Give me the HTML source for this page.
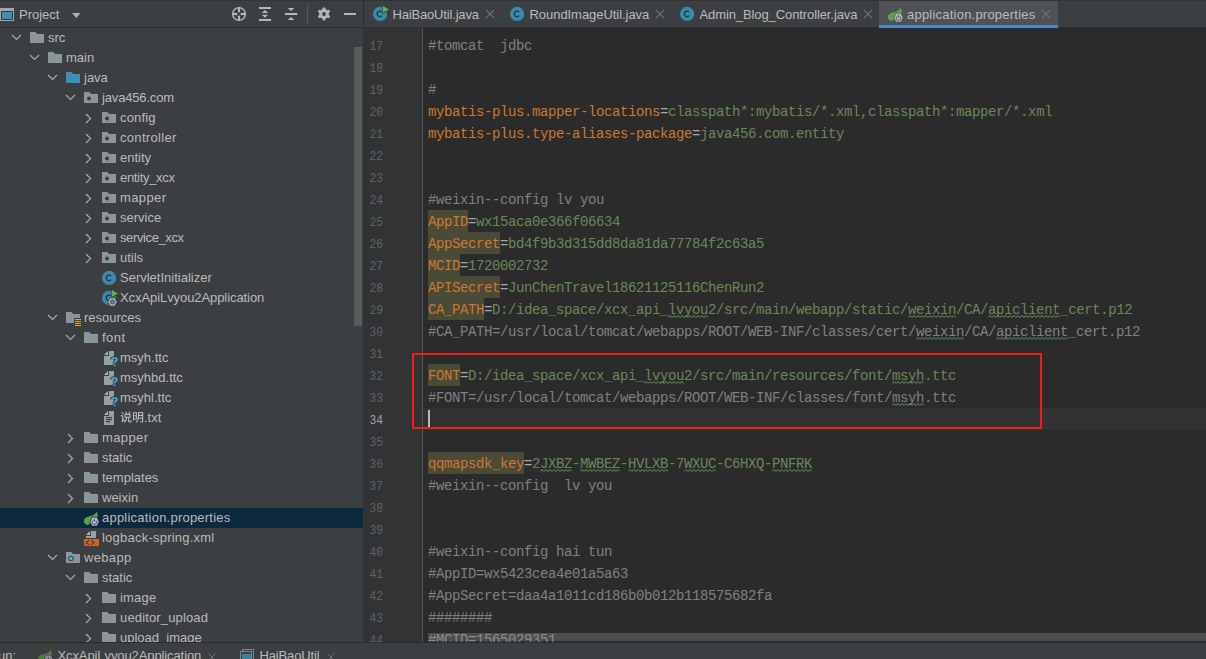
<!DOCTYPE html>
<html><head><meta charset="utf-8"><style>
*{margin:0;padding:0;box-sizing:border-box}
html,body{width:1206px;height:659px;overflow:hidden;background:#3C3F41}
body{position:relative;font-family:"Liberation Sans",sans-serif;font-size:13px;color:#BBBBBB}
.abs{position:absolute}
.ic{position:absolute;display:block}
#topline{position:absolute;left:0;top:0;width:1206px;height:1px;background:#323435}
#phead{position:absolute;left:0;top:0;width:363px;height:28px;background:#3C3F41;border-bottom:1px solid #2B2D2F}
#tree{position:absolute;left:0;top:28px;width:363px;height:614px;overflow:hidden;background:#3C3F41}
.tl{position:absolute;height:20px;line-height:20px;white-space:nowrap}
.sel{position:absolute;left:0;width:363px;height:20px;background:#0D293E}
#vscroll{position:absolute;left:354px;top:47px;width:8px;height:279px;background:#595B5D}
#psep{position:absolute;left:363px;top:0;width:1px;height:27px;background:#2B2D2F}
#tabs{position:absolute;left:364px;top:0;width:842px;height:28px;background:#3C3F41;border-bottom:1px solid #2B2D2F}
.tab{position:absolute;top:1px;height:27px;line-height:27px;white-space:nowrap}
.tabx{position:absolute;top:9px;margin-left:-1px}
#gutter{position:absolute;left:363px;top:28px;width:59px;height:614px;background:#313335;overflow:hidden}
#gline{position:absolute;left:422px;top:28px;width:1px;height:614px;background:#555555}
.ln{position:absolute;left:1px;width:19px;text-align:right;height:22px;line-height:22px;padding-top:2px;font-family:"Liberation Mono",monospace;font-size:12.5px;color:#606366;transform:scaleX(0.9);transform-origin:19px 0}
.ln.cur{color:#A4A3A3}
#editor{position:absolute;left:423px;top:28px;width:783px;height:614px;background:#2B2B2B;overflow:hidden}
#code{position:absolute;left:5px;top:0;}
.cl{position:absolute;left:0;height:22px;line-height:22px;padding-top:1px;white-space:pre;font-family:"Liberation Mono",monospace;font-size:14px;letter-spacing:-0.4px}
.tabul{}
.curline{position:absolute;left:-5px;width:783px;height:22px;background:#323232}
.hl{position:absolute;height:22px;background:#4B4A36}
.typo{position:absolute;display:block}
.k{color:#CC7832} .v{color:#6A8759} .c{color:#808080} .e{color:#A0A8B0}
#caret{position:absolute;left:5px;top:382px;width:2px;height:17px;background:#BBBBBB}
#hscroll{position:absolute;left:5px;top:605px;width:778px;height:8px;background:rgba(180,180,180,0.25)}
#redbox{position:absolute;left:412px;top:353px;width:630px;height:76px;border:2px solid #EE1F1A}
.bt{position:absolute;top:0;height:16px;overflow:hidden;white-space:nowrap;line-height:26px}
#bottom{position:absolute;left:0;top:642px;width:1206px;height:17px;background:#3C3F41;border-top:1px solid #2B2D2F}
</style></head><body>
<div id="phead">
<svg class="ic" style="left:0;top:0" width="363" height="27">
<rect x="0" y="8" width="14" height="13" fill="#9AA7B0"/><rect x="1" y="11" width="12" height="9" fill="#35393B"/><rect x="2" y="12" width="10" height="7" fill="#3D8FB0"/>
<path d="M72,13 H80.5 L76.25,18 Z" fill="#AFB1B3"/>
<circle cx="239" cy="14" r="6.4" fill="none" stroke="#B4B6B8" stroke-width="1.4"/>
<rect x="237.9" y="7" width="2.2" height="5.3" fill="#B4B6B8"/><rect x="237.9" y="15.7" width="2.2" height="5.3" fill="#B4B6B8"/>
<rect x="232" y="12.9" width="5.3" height="2.2" fill="#B4B6B8"/><rect x="240.7" y="12.9" width="5.3" height="2.2" fill="#B4B6B8"/>
<rect x="259" y="7" width="12" height="2" fill="#B4B6B8"/><rect x="259" y="19" width="12" height="2" fill="#B4B6B8"/>
<path d="M261.7,13 L265,10 L268.3,13 Z M261.7,14.8 L268.3,14.8 L265,17.8 Z" fill="#B4B6B8"/>
<rect x="285" y="13" width="12.3" height="2" fill="#B4B6B8"/>
<path d="M287.7,8 L294.3,8 L291,11 Z M287.7,20 L291,17 L294.3,20 Z" fill="#B4B6B8"/>
<rect x="307" y="4" width="1" height="20" fill="#55595C"/>
<g transform="translate(324,14)" fill="#B4B6B8"><circle r="4.9"/><rect x="-1.4" y="-6.6" width="2.8" height="13.2" rx="0.8"/><rect x="-1.4" y="-6.6" width="2.8" height="13.2" rx="0.8" transform="rotate(60)"/><rect x="-1.4" y="-6.6" width="2.8" height="13.2" rx="0.8" transform="rotate(120)"/><circle r="1.9" fill="#3C3F41"/></g>
<rect x="344" y="13" width="12" height="2" fill="#B4B6B8"/>
</svg>
<div class="tl" style="left:19px;top:5px">Project</div>
</div>
<div id="tree">
<svg class="ic" style="left:11.0px;top:6px" width="11" height="7"><polyline points="1,1 5.5,5.5 10,1" fill="none" stroke="#A9ABAD" stroke-width="1.2"/></svg><svg class="ic" style="left:30px;top:4px" width="16" height="16"><path d="M0,0 H5.2 L7.2,2 H14 V11 H0 Z" fill="#8A959C"/></svg><div class="tl" style="top:0px;left:48px;">src</div><svg class="ic" style="left:29.0px;top:26px" width="11" height="7"><polyline points="1,1 5.5,5.5 10,1" fill="none" stroke="#A9ABAD" stroke-width="1.2"/></svg><svg class="ic" style="left:48px;top:24px" width="16" height="16"><path d="M0,0 H5.2 L7.2,2 H14 V11 H0 Z" fill="#8A959C"/></svg><div class="tl" style="top:20px;left:66px;">main</div><svg class="ic" style="left:47.0px;top:46px" width="11" height="7"><polyline points="1,1 5.5,5.5 10,1" fill="none" stroke="#A9ABAD" stroke-width="1.2"/></svg><svg class="ic" style="left:66px;top:44px" width="16" height="16"><path d="M0,0 H5.2 L7.2,2 H14 V11 H0 Z" fill="#3E8FB3"/></svg><div class="tl" style="top:40px;left:84px;">java</div><svg class="ic" style="left:65.0px;top:66px" width="11" height="7"><polyline points="1,1 5.5,5.5 10,1" fill="none" stroke="#A9ABAD" stroke-width="1.2"/></svg><svg class="ic" style="left:84px;top:64px" width="16" height="16"><path d="M0,0 H5.2 L7.2,2 H14 V11 H0 Z" fill="#8A959C"/><circle cx="5" cy="6.5" r="2" fill="#3C3F41"/></svg><div class="tl" style="top:60px;left:102px;letter-spacing:-0.164px;">java456.com</div><svg class="ic" style="left:85.0px;top:84.5px" width="7" height="11"><polyline points="1,1 5.5,5.5 1,10" fill="none" stroke="#A9ABAD" stroke-width="1.2"/></svg><svg class="ic" style="left:102px;top:84px" width="16" height="16"><path d="M0,0 H5.2 L7.2,2 H14 V11 H0 Z" fill="#8A959C"/><circle cx="5" cy="6.5" r="2" fill="#3C3F41"/></svg><div class="tl" style="top:80px;left:120px;letter-spacing:0.183px;">config</div><svg class="ic" style="left:85.0px;top:104.5px" width="7" height="11"><polyline points="1,1 5.5,5.5 1,10" fill="none" stroke="#A9ABAD" stroke-width="1.2"/></svg><svg class="ic" style="left:102px;top:104px" width="16" height="16"><path d="M0,0 H5.2 L7.2,2 H14 V11 H0 Z" fill="#8A959C"/><circle cx="5" cy="6.5" r="2" fill="#3C3F41"/></svg><div class="tl" style="top:100px;left:120px;letter-spacing:0.310px;">controller</div><svg class="ic" style="left:85.0px;top:124.5px" width="7" height="11"><polyline points="1,1 5.5,5.5 1,10" fill="none" stroke="#A9ABAD" stroke-width="1.2"/></svg><svg class="ic" style="left:102px;top:124px" width="16" height="16"><path d="M0,0 H5.2 L7.2,2 H14 V11 H0 Z" fill="#8A959C"/><circle cx="5" cy="6.5" r="2" fill="#3C3F41"/></svg><div class="tl" style="top:120px;left:120px;">entity</div><svg class="ic" style="left:85.0px;top:144.5px" width="7" height="11"><polyline points="1,1 5.5,5.5 1,10" fill="none" stroke="#A9ABAD" stroke-width="1.2"/></svg><svg class="ic" style="left:102px;top:144px" width="16" height="16"><path d="M0,0 H5.2 L7.2,2 H14 V11 H0 Z" fill="#8A959C"/><circle cx="5" cy="6.5" r="2" fill="#3C3F41"/></svg><div class="tl" style="top:140px;left:120px;letter-spacing:-0.320px;">entity_xcx</div><svg class="ic" style="left:85.0px;top:164.5px" width="7" height="11"><polyline points="1,1 5.5,5.5 1,10" fill="none" stroke="#A9ABAD" stroke-width="1.2"/></svg><svg class="ic" style="left:102px;top:164px" width="16" height="16"><path d="M0,0 H5.2 L7.2,2 H14 V11 H0 Z" fill="#8A959C"/><circle cx="5" cy="6.5" r="2" fill="#3C3F41"/></svg><div class="tl" style="top:160px;left:120px;letter-spacing:0.383px;">mapper</div><svg class="ic" style="left:85.0px;top:184.5px" width="7" height="11"><polyline points="1,1 5.5,5.5 1,10" fill="none" stroke="#A9ABAD" stroke-width="1.2"/></svg><svg class="ic" style="left:102px;top:184px" width="16" height="16"><path d="M0,0 H5.2 L7.2,2 H14 V11 H0 Z" fill="#8A959C"/><circle cx="5" cy="6.5" r="2" fill="#3C3F41"/></svg><div class="tl" style="top:180px;left:120px;">service</div><svg class="ic" style="left:85.0px;top:204.5px" width="7" height="11"><polyline points="1,1 5.5,5.5 1,10" fill="none" stroke="#A9ABAD" stroke-width="1.2"/></svg><svg class="ic" style="left:102px;top:204px" width="16" height="16"><path d="M0,0 H5.2 L7.2,2 H14 V11 H0 Z" fill="#8A959C"/><circle cx="5" cy="6.5" r="2" fill="#3C3F41"/></svg><div class="tl" style="top:200px;left:120px;letter-spacing:-0.382px;">service_xcx</div><svg class="ic" style="left:85.0px;top:224.5px" width="7" height="11"><polyline points="1,1 5.5,5.5 1,10" fill="none" stroke="#A9ABAD" stroke-width="1.2"/></svg><svg class="ic" style="left:102px;top:224px" width="16" height="16"><path d="M0,0 H5.2 L7.2,2 H14 V11 H0 Z" fill="#8A959C"/><circle cx="5" cy="6.5" r="2" fill="#3C3F41"/></svg><div class="tl" style="top:220px;left:120px;">utils</div><svg class="ic" style="left:101px;top:240px" width="20" height="20"><circle cx="8.1" cy="9.9" r="7.1" fill="#3B89AC"/><path d="M10,8.2 A2.7,2.7 0 1 0 10,11.6" fill="none" stroke="#26343C" stroke-width="1.3"/></svg><div class="tl" style="top:240px;left:120px;">ServletInitializer</div><svg class="ic" style="left:101px;top:260px" width="20" height="20"><circle cx="8.1" cy="9.9" r="7.1" fill="#3B89AC"/><path d="M10,8.2 A2.7,2.7 0 1 0 10,11.6" fill="none" stroke="#26343C" stroke-width="1.3"/><path d="M10.5,1 L18.8,5.5 L10.5,10 Z" fill="#3C3F41"/><path d="M11,2 L16.9,5.5 L11,8.7 Z" fill="#5DB34A"/><path d="M6.3,14 L8.9,9.4 L14.1,9.4 L16.7,14 L14.1,18.6 L8.9,18.6 Z" fill="#3C3F41"/><path d="M7.2,14 L9.35,10.2 L13.65,10.2 L15.8,14 L13.65,17.8 L9.35,17.8 Z" fill="#AFB5BA"/><circle cx="11.5" cy="14" r="2" fill="#5A95B0" stroke="#3C3F41" stroke-width="0.9"/></svg><div class="tl" style="top:260px;left:120px;letter-spacing:-0.078px;">XcxApiLvyou2Application</div><svg class="ic" style="left:47.0px;top:286px" width="11" height="7"><polyline points="1,1 5.5,5.5 10,1" fill="none" stroke="#A9ABAD" stroke-width="1.2"/></svg><svg class="ic" style="left:66px;top:284px" width="18" height="16"><path d="M0,0 H5.2 L7.2,2 H14 V11 H0 Z" fill="#8A959C"/><rect x="8" y="6" width="8" height="9" fill="#3C3F41"/><rect x="9" y="7" width="6" height="1" fill="#E3A43A"/><rect x="9" y="9" width="6" height="1" fill="#E3A43A"/><rect x="9" y="11" width="6" height="1" fill="#E3A43A"/><rect x="9" y="13" width="6" height="1" fill="#E3A43A"/></svg><div class="tl" style="top:280px;left:84px;">resources</div><svg class="ic" style="left:65.0px;top:306px" width="11" height="7"><polyline points="1,1 5.5,5.5 10,1" fill="none" stroke="#A9ABAD" stroke-width="1.2"/></svg><svg class="ic" style="left:84px;top:304px" width="16" height="16"><path d="M0,0 H5.2 L7.2,2 H14 V11 H0 Z" fill="#8A959C"/></svg><div class="tl" style="top:300px;left:102px;letter-spacing:0.475px;">font</div><svg class="ic" style="left:102px;top:321px" width="18" height="18"><path d="M2,6 L6,2 V6 Z" fill="#A9B4BB"/><path d="M7,2 H12 V16 H2 V7 H7 Z" fill="#95A0A7"/><path d="M9.9,10.6 C9.9,8.4 14.9,8.4 14.9,10.6 C14.9,12.3 12.4,12.3 12.4,14.2" fill="none" stroke="#3C3F41" stroke-width="3.6"/><rect x="10.7" y="14.6" width="3.4" height="3.2" fill="#3C3F41"/><path d="M9.9,10.6 C9.9,8.4 14.9,8.4 14.9,10.6 C14.9,12.3 12.4,12.3 12.4,14.2" fill="none" stroke="#40B6E0" stroke-width="1.6"/><rect x="11.6" y="15.4" width="1.7" height="1.7" fill="#40B6E0"/></svg><div class="tl" style="top:320px;left:120px;">msyh.ttc</div><svg class="ic" style="left:102px;top:341px" width="18" height="18"><path d="M2,6 L6,2 V6 Z" fill="#A9B4BB"/><path d="M7,2 H12 V16 H2 V7 H7 Z" fill="#95A0A7"/><path d="M9.9,10.6 C9.9,8.4 14.9,8.4 14.9,10.6 C14.9,12.3 12.4,12.3 12.4,14.2" fill="none" stroke="#3C3F41" stroke-width="3.6"/><rect x="10.7" y="14.6" width="3.4" height="3.2" fill="#3C3F41"/><path d="M9.9,10.6 C9.9,8.4 14.9,8.4 14.9,10.6 C14.9,12.3 12.4,12.3 12.4,14.2" fill="none" stroke="#40B6E0" stroke-width="1.6"/><rect x="11.6" y="15.4" width="1.7" height="1.7" fill="#40B6E0"/></svg><div class="tl" style="top:340px;left:120px;">msyhbd.ttc</div><svg class="ic" style="left:102px;top:361px" width="18" height="18"><path d="M2,6 L6,2 V6 Z" fill="#A9B4BB"/><path d="M7,2 H12 V16 H2 V7 H7 Z" fill="#95A0A7"/><path d="M9.9,10.6 C9.9,8.4 14.9,8.4 14.9,10.6 C14.9,12.3 12.4,12.3 12.4,14.2" fill="none" stroke="#3C3F41" stroke-width="3.6"/><rect x="10.7" y="14.6" width="3.4" height="3.2" fill="#3C3F41"/><path d="M9.9,10.6 C9.9,8.4 14.9,8.4 14.9,10.6 C14.9,12.3 12.4,12.3 12.4,14.2" fill="none" stroke="#40B6E0" stroke-width="1.6"/><rect x="11.6" y="15.4" width="1.7" height="1.7" fill="#40B6E0"/></svg><div class="tl" style="top:360px;left:120px;">msyhl.ttc</div><svg class="ic" style="left:102px;top:381px" width="18" height="18"><path d="M2,6 L6,2 V6 Z" fill="#A9B4BB"/><path d="M7,2 H12 V16 H2 V7 H7 Z" fill="#95A0A7"/><rect x="4" y="8" width="6" height="1.2" fill="#3C3F41"/><rect x="4" y="10" width="6" height="1.2" fill="#3C3F41"/><rect x="4" y="12" width="4" height="1.2" fill="#3C3F41"/></svg><div class="tl" style="top:380px;left:120px"><svg style="position:absolute;left:0;top:2px" width="24" height="16" viewBox="0 -880 2000 1160"><g transform="scale(1,-1)"><path d="M99 769C153 719 222 646 254 602L321 668C288 711 217 779 163 826ZM472 560H786V400H472ZM168 -56C185 -34 217 -7 412 140C402 159 387 199 380 226L273 149V533H41V440H177V129C177 84 138 46 115 31C133 11 159 -32 168 -56ZM380 644V315H499C488 162 458 50 294 -12C314 -29 340 -62 351 -84C538 -7 579 129 594 315H674V48C674 -43 693 -71 776 -71C792 -71 847 -71 863 -71C931 -71 955 -35 964 100C938 106 899 122 880 137C878 32 874 17 853 17C842 17 800 17 791 17C771 17 768 21 768 49V315H882V644H782C809 694 837 755 864 813L764 843C745 783 711 701 681 644H528L594 673C578 720 538 790 499 842L418 808C454 757 489 691 504 644Z" fill="#BBBBBB"/><path transform="translate(1000,0)" d="M325 445V268H163V445ZM325 530H163V699H325ZM75 786V91H163V181H413V786ZM840 715V562H588V715ZM496 802V444C496 289 479 100 310 -27C330 -40 366 -72 380 -91C494 -6 547 114 570 234H840V32C840 15 834 9 816 8C798 8 736 7 676 9C690 -15 706 -57 710 -83C795 -83 851 -80 887 -65C922 -50 934 -22 934 31V802ZM840 476V320H583C587 363 588 404 588 443V476Z" fill="#BBBBBB"/></g></svg><span style="padding-left:24px">.txt</span></div><svg class="ic" style="left:67.0px;top:404.5px" width="7" height="11"><polyline points="1,1 5.5,5.5 1,10" fill="none" stroke="#A9ABAD" stroke-width="1.2"/></svg><svg class="ic" style="left:84px;top:404px" width="16" height="16"><path d="M0,0 H5.2 L7.2,2 H14 V11 H0 Z" fill="#8A959C"/></svg><div class="tl" style="top:400px;left:102px;letter-spacing:0.383px;">mapper</div><svg class="ic" style="left:67.0px;top:424.5px" width="7" height="11"><polyline points="1,1 5.5,5.5 1,10" fill="none" stroke="#A9ABAD" stroke-width="1.2"/></svg><svg class="ic" style="left:84px;top:424px" width="16" height="16"><path d="M0,0 H5.2 L7.2,2 H14 V11 H0 Z" fill="#8A959C"/></svg><div class="tl" style="top:420px;left:102px;">static</div><svg class="ic" style="left:67.0px;top:444.5px" width="7" height="11"><polyline points="1,1 5.5,5.5 1,10" fill="none" stroke="#A9ABAD" stroke-width="1.2"/></svg><svg class="ic" style="left:84px;top:444px" width="16" height="16"><path d="M0,0 H5.2 L7.2,2 H14 V11 H0 Z" fill="#8A959C"/></svg><div class="tl" style="top:440px;left:102px;">templates</div><svg class="ic" style="left:67.0px;top:464.5px" width="7" height="11"><polyline points="1,1 5.5,5.5 1,10" fill="none" stroke="#A9ABAD" stroke-width="1.2"/></svg><svg class="ic" style="left:84px;top:464px" width="16" height="16"><path d="M0,0 H5.2 L7.2,2 H14 V11 H0 Z" fill="#8A959C"/></svg><div class="tl" style="top:460px;left:102px;">weixin</div><div class="sel" style="top:480px"></div><svg class="ic" style="left:80px;top:480px" width="20" height="20"><path d="M16.5,3.8 C15,7 12,8 9,8.5 C5.5,9 3.8,11 3.9,13.5 C4,15.5 5.5,16.2 7.5,16 C12,15.5 17,13 17.8,9.5 C18,7.5 17.4,5.5 16.5,3.8 Z" fill="#5FA04E"/><path d="M6.2,16.8 L9.8,15.6" stroke="#5FA04E" stroke-width="1"/><path d="M9.3,13.7 L11.9,8.799999999999999 L17.1,8.799999999999999 L19.7,13.7 L17.1,18.6 L11.9,18.6 Z" fill="#0D293E"/><path d="M10.1,13.7 L12.3,9.6 L16.7,9.6 L18.9,13.7 L16.7,17.799999999999997 L12.3,17.799999999999997 Z" fill="#AFB8BF"/><path d="M13.2,12.3 A2.3,2.3 0 1 0 15.8,12.3" fill="none" stroke="#4A5054" stroke-width="0.9"/><rect x="14.05" y="11" width="0.9" height="2.4" fill="#4A5054"/></svg><div class="tl" style="top:480px;left:102px;letter-spacing:0.223px;">application.properties</div><svg class="ic" style="left:84px;top:501px" width="18" height="18"><path d="M2,6 L6,2 V6 Z" fill="#A9B4BB"/><path d="M7,2 H12 V9 H2 V7 H7 Z" fill="#95A0A7"/><rect x="0" y="10" width="15" height="7" fill="#CC6129"/><polyline points="5,11.2 2.2,13.5 5,15.8" fill="none" stroke="#3C3F41" stroke-width="1.1"/><polyline points="7.2,11.2 10,13.5 7.2,15.8" fill="none" stroke="#3C3F41" stroke-width="1.1"/></svg><div class="tl" style="top:500px;left:102px;letter-spacing:0.228px;">logback-spring.xml</div><svg class="ic" style="left:47.0px;top:526px" width="11" height="7"><polyline points="1,1 5.5,5.5 10,1" fill="none" stroke="#A9ABAD" stroke-width="1.2"/></svg><svg class="ic" style="left:66px;top:524px" width="16" height="16"><path d="M0,0 H5.2 L7.2,2 H14 V11 H0 Z" fill="#8A959C"/><circle cx="5" cy="6.5" r="2.7" fill="#3C3F41"/><circle cx="5" cy="6.5" r="1.8" fill="#40B6E0"/></svg><div class="tl" style="top:520px;left:84px;letter-spacing:0.333px;">webapp</div><svg class="ic" style="left:65.0px;top:546px" width="11" height="7"><polyline points="1,1 5.5,5.5 10,1" fill="none" stroke="#A9ABAD" stroke-width="1.2"/></svg><svg class="ic" style="left:84px;top:544px" width="16" height="16"><path d="M0,0 H5.2 L7.2,2 H14 V11 H0 Z" fill="#8A959C"/></svg><div class="tl" style="top:540px;left:102px;">static</div><svg class="ic" style="left:85.0px;top:564.5px" width="7" height="11"><polyline points="1,1 5.5,5.5 1,10" fill="none" stroke="#A9ABAD" stroke-width="1.2"/></svg><svg class="ic" style="left:102px;top:564px" width="16" height="16"><path d="M0,0 H5.2 L7.2,2 H14 V11 H0 Z" fill="#8A959C"/></svg><div class="tl" style="top:560px;left:120px;letter-spacing:0.200px;">image</div><svg class="ic" style="left:85.0px;top:584.5px" width="7" height="11"><polyline points="1,1 5.5,5.5 1,10" fill="none" stroke="#A9ABAD" stroke-width="1.2"/></svg><svg class="ic" style="left:102px;top:584px" width="16" height="16"><path d="M0,0 H5.2 L7.2,2 H14 V11 H0 Z" fill="#8A959C"/></svg><div class="tl" style="top:580px;left:120px;letter-spacing:0.150px;">ueditor_upload</div><svg class="ic" style="left:85.0px;top:604.5px" width="7" height="11"><polyline points="1,1 5.5,5.5 1,10" fill="none" stroke="#A9ABAD" stroke-width="1.2"/></svg><svg class="ic" style="left:102px;top:604px" width="16" height="16"><path d="M0,0 H5.2 L7.2,2 H14 V11 H0 Z" fill="#8A959C"/></svg><div class="tl" style="top:600px;left:120px;">upload_image</div>
</div>
<div id="vscroll"></div>
<div id="psep"></div>
<div id="tabs">
<svg class="ic" style="left:8px;top:4px" width="20" height="20"><circle cx="8.1" cy="9.9" r="7.1" fill="#3B89AC"/><path d="M10,8.2 A2.7,2.7 0 1 0 10,11.6" fill="none" stroke="#26343C" stroke-width="1.3"/><path d="M10.5,1 L18.8,5.5 L10.5,10 Z" fill="#3C3F41"/><path d="M11,2 L16.9,5.5 L11,8.7 Z" fill="#5DB34A"/></svg>
<div class="tab" style="left:28.5px;letter-spacing:-0.17px">HaiBaoUtil.java</div>
<svg class="tabx" style="left:122px" width="10" height="10"><path d="M1,1 L9,9 M9,1 L1,9" stroke="#6E7072" stroke-width="1.1"/></svg>
<svg class="ic" style="left:145px;top:4px" width="20" height="20"><circle cx="8.1" cy="9.9" r="7.1" fill="#3B89AC"/><path d="M10,8.2 A2.7,2.7 0 1 0 10,11.6" fill="none" stroke="#26343C" stroke-width="1.3"/></svg>
<div class="tab" style="left:165.5px;letter-spacing:-0.05px">RoundImageUtil.java</div>
<svg class="tabx" style="left:292px" width="10" height="10"><path d="M1,1 L9,9 M9,1 L1,9" stroke="#6E7072" stroke-width="1.1"/></svg>
<svg class="ic" style="left:315px;top:4px" width="20" height="20"><circle cx="8.1" cy="9.9" r="7.1" fill="#3B89AC"/><path d="M10,8.2 A2.7,2.7 0 1 0 10,11.6" fill="none" stroke="#26343C" stroke-width="1.3"/></svg>
<div class="tab" style="left:335.5px;letter-spacing:-0.1px">Admin_Blog_Controller.java</div>
<svg class="tabx" style="left:500px" width="10" height="10"><path d="M1,1 L9,9 M9,1 L1,9" stroke="#6E7072" stroke-width="1.1"/></svg>
<div class="abs" style="left:515px;top:1px;width:179px;height:26px;background:#4E5254"></div>
<div class="abs" style="left:515px;top:25px;width:179px;height:3px;background:#4A88C7"></div>
<svg class="ic" style="left:520px;top:4px" width="20" height="20"><path d="M16.5,3.8 C15,7 12,8 9,8.5 C5.5,9 3.8,11 3.9,13.5 C4,15.5 5.5,16.2 7.5,16 C12,15.5 17,13 17.8,9.5 C18,7.5 17.4,5.5 16.5,3.8 Z" fill="#5FA04E"/><path d="M6.2,16.8 L9.8,15.6" stroke="#5FA04E" stroke-width="1"/><path d="M9.3,13.7 L11.9,8.799999999999999 L17.1,8.799999999999999 L19.7,13.7 L17.1,18.6 L11.9,18.6 Z" fill="#4E5254"/><path d="M10.1,13.7 L12.3,9.6 L16.7,9.6 L18.9,13.7 L16.7,17.799999999999997 L12.3,17.799999999999997 Z" fill="#AFB8BF"/><path d="M13.2,12.3 A2.3,2.3 0 1 0 15.8,12.3" fill="none" stroke="#4A5054" stroke-width="0.9"/><rect x="14.05" y="11" width="0.9" height="2.4" fill="#4A5054"/></svg>
<div class="tab" style="left:543px;letter-spacing:0.22px">application.properties</div>
<svg class="tabx" style="left:678px" width="10" height="10"><path d="M1,1 L9,9 M9,1 L1,9" stroke="#6E7072" stroke-width="1.1"/></svg>
</div>
<div id="gutter"><div class="ln" style="top:6px">17</div><div class="ln" style="top:28px">18</div><div class="ln" style="top:50px">19</div><div class="ln" style="top:72px">20</div><div class="ln" style="top:94px">21</div><div class="ln" style="top:116px">22</div><div class="ln" style="top:138px">23</div><div class="ln" style="top:160px">24</div><div class="ln" style="top:182px">25</div><div class="ln" style="top:204px">26</div><div class="ln" style="top:226px">27</div><div class="ln" style="top:248px">28</div><div class="ln" style="top:270px">29</div><div class="ln" style="top:292px">30</div><div class="ln" style="top:314px">31</div><div class="ln" style="top:336px">32</div><div class="ln" style="top:358px">33</div><div class="ln cur" style="top:380px">34</div><div class="ln" style="top:402px">35</div><div class="ln" style="top:424px">36</div><div class="ln" style="top:446px">37</div><div class="ln" style="top:468px">38</div><div class="ln" style="top:490px">39</div><div class="ln" style="top:512px">40</div><div class="ln" style="top:534px">41</div><div class="ln" style="top:556px">42</div><div class="ln" style="top:578px">43</div><div class="ln" style="top:600px">44</div></div>
<div id="gline"></div>
<div id="editor"><div id="code"><div class="cl" style="top:6px"><span class="c">#tomcat  jdbc</span></div><div class="cl" style="top:28px"></div><div class="cl" style="top:50px"><span class="c">#</span></div><div class="cl" style="top:72px"><span class="k">mybatis-plus.mapper-locations</span><span class="e">=</span><span class="v">classpath*:mybatis/*.xml,classpath*:mapper/*.xml</span></div><div class="cl" style="top:94px"><span class="k">mybatis-plus.type-aliases-package</span><span class="e">=</span><span class="v">java456.com.entity</span></div><div class="cl" style="top:116px"></div><div class="cl" style="top:138px"></div><div class="cl" style="top:160px"><span class="c">#weixin--config lv you</span></div><div class="hl" style="top:182px;left:0.0px;width:40.0px"></div><div class="cl" style="top:182px"><span class="k">AppID</span><span class="e">=</span><span class="v">wx15aca0e366f06634</span></div><div class="hl" style="top:204px;left:0.0px;width:72.0px"></div><div class="cl" style="top:204px"><span class="k">AppSecret</span><span class="e">=</span><span class="v">bd4f9b3d315dd8da81da77784f2c63a5</span></div><div class="hl" style="top:226px;left:0.0px;width:32.0px"></div><div class="cl" style="top:226px"><span class="k">MCID</span><span class="e">=</span><span class="v">1720002732</span></div><div class="hl" style="top:248px;left:0.0px;width:72.0px"></div><div class="cl" style="top:248px"><span class="k">APISecret</span><span class="e">=</span><span class="v">JunChenTravel18621125116ChenRun2</span></div><div class="hl" style="top:270px;left:0.0px;width:56.0px"></div><svg class="typo" style="top:287px;left:240.0px" width="40" height="3"><polyline points="0,2.5 2,0.5 4,2.5 6,0.5 8,2.5 10,0.5 12,2.5 14,0.5 16,2.5 18,0.5 20,2.5 22,0.5 24,2.5 26,0.5 28,2.5 30,0.5 32,2.5 34,0.5 36,2.5 38,0.5 40,2.5" fill="none" stroke="#659C6B" stroke-width="1"/></svg><svg class="typo" style="top:287px;left:480.0px" width="48" height="3"><polyline points="0,2.5 2,0.5 4,2.5 6,0.5 8,2.5 10,0.5 12,2.5 14,0.5 16,2.5 18,0.5 20,2.5 22,0.5 24,2.5 26,0.5 28,2.5 30,0.5 32,2.5 34,0.5 36,2.5 38,0.5 40,2.5 42,0.5 44,2.5 46,0.5 48,2.5" fill="none" stroke="#659C6B" stroke-width="1"/></svg><svg class="typo" style="top:287px;left:560.0px" width="72" height="3"><polyline points="0,2.5 2,0.5 4,2.5 6,0.5 8,2.5 10,0.5 12,2.5 14,0.5 16,2.5 18,0.5 20,2.5 22,0.5 24,2.5 26,0.5 28,2.5 30,0.5 32,2.5 34,0.5 36,2.5 38,0.5 40,2.5 42,0.5 44,2.5 46,0.5 48,2.5 50,0.5 52,2.5 54,0.5 56,2.5 58,0.5 60,2.5 62,0.5 64,2.5 66,0.5 68,2.5 70,0.5 72,2.5" fill="none" stroke="#659C6B" stroke-width="1"/></svg><div class="cl" style="top:270px"><span class="k">CA_PATH</span><span class="e">=</span><span class="v">D:/idea_space/xcx_api_lvyou2/src/main/webapp/static/weixin/CA/apiclient_cert.p12</span></div><svg class="typo" style="top:309px;left:488.0px" width="48" height="3"><polyline points="0,2.5 2,0.5 4,2.5 6,0.5 8,2.5 10,0.5 12,2.5 14,0.5 16,2.5 18,0.5 20,2.5 22,0.5 24,2.5 26,0.5 28,2.5 30,0.5 32,2.5 34,0.5 36,2.5 38,0.5 40,2.5 42,0.5 44,2.5 46,0.5 48,2.5" fill="none" stroke="#659C6B" stroke-width="1"/></svg><svg class="typo" style="top:309px;left:568.0px" width="72" height="3"><polyline points="0,2.5 2,0.5 4,2.5 6,0.5 8,2.5 10,0.5 12,2.5 14,0.5 16,2.5 18,0.5 20,2.5 22,0.5 24,2.5 26,0.5 28,2.5 30,0.5 32,2.5 34,0.5 36,2.5 38,0.5 40,2.5 42,0.5 44,2.5 46,0.5 48,2.5 50,0.5 52,2.5 54,0.5 56,2.5 58,0.5 60,2.5 62,0.5 64,2.5 66,0.5 68,2.5 70,0.5 72,2.5" fill="none" stroke="#659C6B" stroke-width="1"/></svg><div class="cl" style="top:292px"><span class="c">#CA_PATH=/usr/local/tomcat/webapps/ROOT/WEB-INF/classes/cert/weixin/CA/apiclient_cert.p12</span></div><div class="cl" style="top:314px"></div><div class="hl" style="top:336px;left:0.0px;width:32.0px"></div><svg class="typo" style="top:353px;left:216.0px" width="40" height="3"><polyline points="0,2.5 2,0.5 4,2.5 6,0.5 8,2.5 10,0.5 12,2.5 14,0.5 16,2.5 18,0.5 20,2.5 22,0.5 24,2.5 26,0.5 28,2.5 30,0.5 32,2.5 34,0.5 36,2.5 38,0.5 40,2.5" fill="none" stroke="#659C6B" stroke-width="1"/></svg><svg class="typo" style="top:353px;left:464.0px" width="32" height="3"><polyline points="0,2.5 2,0.5 4,2.5 6,0.5 8,2.5 10,0.5 12,2.5 14,0.5 16,2.5 18,0.5 20,2.5 22,0.5 24,2.5 26,0.5 28,2.5 30,0.5 32,2.5" fill="none" stroke="#659C6B" stroke-width="1"/></svg><div class="cl" style="top:336px"><span class="k">FONT</span><span class="e">=</span><span class="v">D:/idea_space/xcx_api_lvyou2/src/main/resources/font/msyh.ttc</span></div><svg class="typo" style="top:375px;left:464.0px" width="32" height="3"><polyline points="0,2.5 2,0.5 4,2.5 6,0.5 8,2.5 10,0.5 12,2.5 14,0.5 16,2.5 18,0.5 20,2.5 22,0.5 24,2.5 26,0.5 28,2.5 30,0.5 32,2.5" fill="none" stroke="#659C6B" stroke-width="1"/></svg><div class="cl" style="top:358px"><span class="c">#FONT=/usr/local/tomcat/webapps/ROOT/WEB-INF/classes/font/msyh.ttc</span></div><div class="curline" style="top:380px"></div><div class="cl" style="top:380px"></div><div class="cl" style="top:402px"></div><div class="hl" style="top:424px;left:0.0px;width:96.0px"></div><svg class="typo" style="top:441px;left:112.0px" width="32" height="3"><polyline points="0,2.5 2,0.5 4,2.5 6,0.5 8,2.5 10,0.5 12,2.5 14,0.5 16,2.5 18,0.5 20,2.5 22,0.5 24,2.5 26,0.5 28,2.5 30,0.5 32,2.5" fill="none" stroke="#659C6B" stroke-width="1"/></svg><svg class="typo" style="top:441px;left:152.0px" width="40" height="3"><polyline points="0,2.5 2,0.5 4,2.5 6,0.5 8,2.5 10,0.5 12,2.5 14,0.5 16,2.5 18,0.5 20,2.5 22,0.5 24,2.5 26,0.5 28,2.5 30,0.5 32,2.5 34,0.5 36,2.5 38,0.5 40,2.5" fill="none" stroke="#659C6B" stroke-width="1"/></svg><svg class="typo" style="top:441px;left:200.0px" width="40" height="3"><polyline points="0,2.5 2,0.5 4,2.5 6,0.5 8,2.5 10,0.5 12,2.5 14,0.5 16,2.5 18,0.5 20,2.5 22,0.5 24,2.5 26,0.5 28,2.5 30,0.5 32,2.5 34,0.5 36,2.5 38,0.5 40,2.5" fill="none" stroke="#659C6B" stroke-width="1"/></svg><svg class="typo" style="top:441px;left:256.0px" width="32" height="3"><polyline points="0,2.5 2,0.5 4,2.5 6,0.5 8,2.5 10,0.5 12,2.5 14,0.5 16,2.5 18,0.5 20,2.5 22,0.5 24,2.5 26,0.5 28,2.5 30,0.5 32,2.5" fill="none" stroke="#659C6B" stroke-width="1"/></svg><svg class="typo" style="top:441px;left:344.0px" width="40" height="3"><polyline points="0,2.5 2,0.5 4,2.5 6,0.5 8,2.5 10,0.5 12,2.5 14,0.5 16,2.5 18,0.5 20,2.5 22,0.5 24,2.5 26,0.5 28,2.5 30,0.5 32,2.5 34,0.5 36,2.5 38,0.5 40,2.5" fill="none" stroke="#659C6B" stroke-width="1"/></svg><div class="cl" style="top:424px"><span class="k">qqmapsdk_key</span><span class="e">=</span><span class="v">2JXBZ-MWBEZ-HVLXB-7WXUC-C6HXQ-PNFRK</span></div><div class="cl" style="top:446px"><span class="c">#weixin--config  lv you</span></div><div class="cl" style="top:468px"></div><div class="cl" style="top:490px"></div><div class="cl" style="top:512px"><span class="c">#weixin--config hai tun</span></div><div class="cl" style="top:534px"><span class="c">#AppID=wx5423cea4e01a5a63</span></div><div class="cl" style="top:556px"><span class="c">#AppSecret=daa4a1011cd186b0b012b118575682fa</span></div><div class="cl" style="top:578px"><span class="c">########</span></div><div class="cl" style="top:600px"><span class="c">#MCID=1565029351</span></div></div>
<div id="caret"></div>
<div id="hscroll"></div>
</div>
<div id="redbox"></div>
<div id="bottom">
<div class="bt" style="left:-2px">un:</div>
<svg class="ic" style="left:34px;top:3px" width="20" height="20"><path d="M16.5,3.8 C15,7 12,8 9,8.5 C5.5,9 3.8,11 3.9,13.5 C4,15.5 5.5,16.2 7.5,16 C12,15.5 17,13 17.8,9.5 C18,7.5 17.4,5.5 16.5,3.8 Z" fill="#4F7D43"/><path d="M6.2,16.8 L9.8,15.6" stroke="#4F7D43" stroke-width="1"/><path d="M9.3,13.7 L11.9,8.799999999999999 L17.1,8.799999999999999 L19.7,13.7 L17.1,18.6 L11.9,18.6 Z" fill="#3C3F41"/><path d="M10.1,13.7 L12.3,9.6 L16.7,9.6 L18.9,13.7 L16.7,17.799999999999997 L12.3,17.799999999999997 Z" fill="#8C9296"/><path d="M13.2,12.3 A2.3,2.3 0 1 0 15.8,12.3" fill="none" stroke="#4A5054" stroke-width="0.9"/><rect x="14.05" y="11" width="0.9" height="2.4" fill="#4A5054"/></svg>
<div class="bt" style="left:57.5px;letter-spacing:-0.1px">XcxApiLvyou2Application</div>
<svg class="ic" style="left:208px;top:10px" width="8" height="8"><path d="M0.5,0.5 L7.5,7.5 M7.5,0.5 L0.5,7.5" stroke="#6E7072" stroke-width="1"/></svg>
<svg class="ic" style="left:240px;top:6px" width="16" height="12"><rect x="2.5" y="0.5" width="11" height="10" fill="none" stroke="#7C868C"/><rect x="0.5" y="2.5" width="11" height="10" fill="#3C3F41" stroke="#7C868C"/><rect x="2" y="5" width="9" height="7" fill="#3E7F9C"/></svg>
<div class="bt" style="left:259.5px;letter-spacing:-0.15px">HaiBaoUtil</div>
<svg class="ic" style="left:327px;top:10px" width="8" height="8"><path d="M0.5,0.5 L7.5,7.5 M7.5,0.5 L0.5,7.5" stroke="#6E7072" stroke-width="1"/></svg>
</div>
<div id="topline"></div>
</body></html>
